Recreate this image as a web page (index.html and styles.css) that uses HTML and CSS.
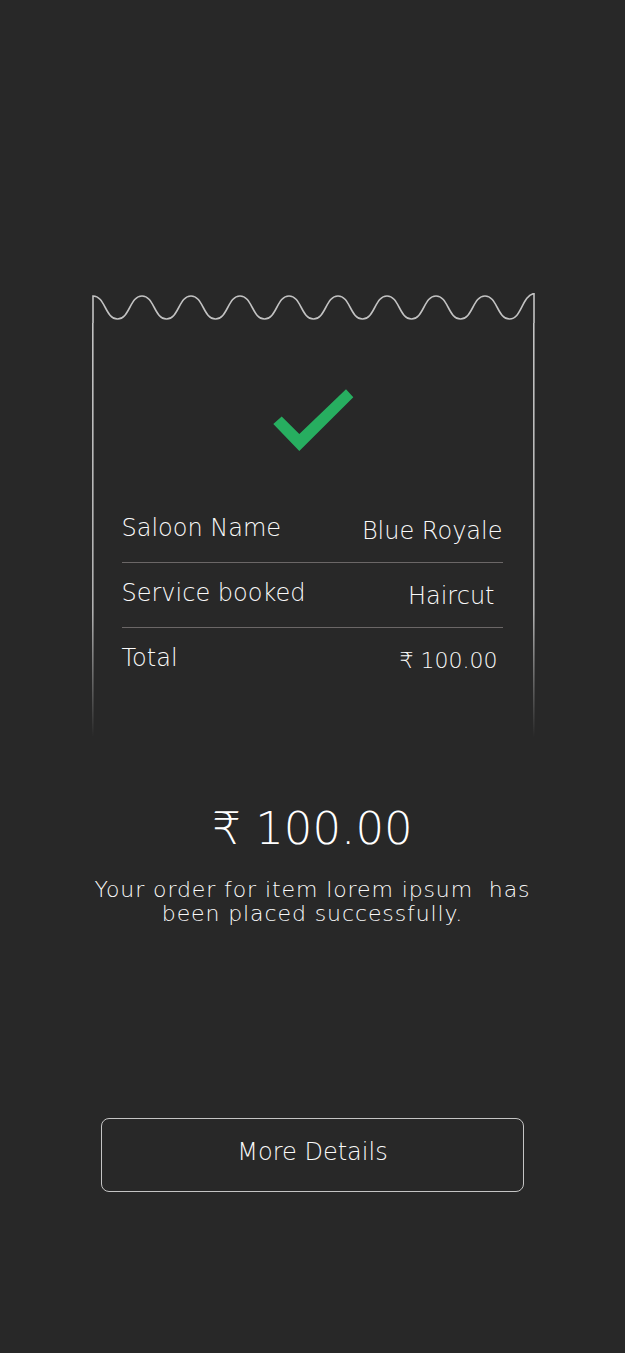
FILE: index.html
```html
<!DOCTYPE html>
<html lang="en">
<head>
<meta charset="utf-8">
<title>Order placed</title>
<link rel="stylesheet" href="styles.css">
</head>
<body>
<main class="page">
  <section class="receipt">
    <svg class="wave" width="443" height="30" viewBox="0 0 443 30">
      <path d="M1 30 L1 3 C13.25 3 13.25 26 25.5 26 S37.75 3 50 3 S62.25 26 74.5 26 S86.75 3 99 3 S111.25 26 123.5 26 S135.75 3 148 3 S160.25 26 172.5 26 S184.75 3 197 3 S209.25 26 221.5 26 S233.75 3 246 3 S258.25 26 270.5 26 S282.75 3 295 3 S307.25 26 319.5 26 S331.75 3 344 3 S356.25 26 368.5 26 S380.75 3 393 3 S405.25 26 417.5 26 S429.75 3 442 0.5 L442 30" fill="none" stroke="#c2c2c2" stroke-width="1.6"/>
    </svg>
    <div class="receipt-body">
      <svg class="check" width="81" height="63" viewBox="0 0 81 63">
        <polygon points="0.3,35 8.7,27.5 26.3,45 73,0.3 80.3,8.3 26.3,62" fill="#27ae60"/>
      </svg>
      <div class="rows">
        <div class="row row-first">
          <span class="label">Saloon Name</span>
          <span class="value">Blue Royale</span>
        </div>
        <div class="row">
          <span class="label">Service booked</span>
          <span class="value value-haircut">Haircut</span>
        </div>
        <div class="row row-last">
          <span class="label">Total</span>
          <span class="value value-amount">₹ 100.00</span>
        </div>
      </div>
    </div>
  </section>

  <h1 class="amount">₹ 100.00</h1>
  <p class="message">Your order for item lorem ipsum&nbsp; has<br>been placed successfully.</p>

  <button class="details-btn" type="button">More Details</button>
</main>
</body>
</html>
```

FILE: styles.css
```css
html, body {
  margin: 0;
  padding: 0;
}

body {
  background: #282828;
  color: #fafafa;
  font-family: "DejaVu Sans", "Open Sans", sans-serif;
  font-weight: 200;
}

.page {
  display: flex;
  flex-direction: column;
  align-items: center;
  min-height: 1353px;
}

.receipt {
  width: 443px;
  margin-top: 293px;
  margin-left: 1px;
}

.wave {
  display: block;
}

.receipt-body {
  box-sizing: border-box;
  height: 414px;
  padding: 0 32px 0 30px;
  display: flex;
  flex-direction: column;
  background:
    linear-gradient(to bottom, #c2c2c2 0%, #b0b0b0 70%, rgba(60,60,60,0) 100%) 0.4px 0 / 1.6px 100% no-repeat,
    linear-gradient(to bottom, #c2c2c2 0%, #b0b0b0 70%, rgba(60,60,60,0) 100%) 441.2px 0 / 1.6px 100% no-repeat;
}

.check {
  display: block;
  margin: 66px auto 0;
  position: relative;
  left: 1px;
}

.rows {
  margin-top: 60px;
  display: flex;
  flex-direction: column;
}

.row {
  display: flex;
  justify-content: space-between;
  align-items: flex-start;
  font-size: 24px;
  line-height: 32px;
  padding: 14px 0 15px;
  border-bottom: 1px solid #6b6767;
}

.row-first {
  padding-top: 0;
}

.row-last {
  border-bottom: none;
}

.value {
  padding-top: 3px;
}

.value-haircut {
  margin-right: 8px;
}

.value-amount {
  font-size: 22px;
  margin-right: 5px;
}

.amount {
  margin: 64px 0 0;
  font-size: 45px;
  font-weight: 200;
  line-height: 56px;
  color: #ffffff;
}

.message {
  margin: 21px 0 0;
  font-size: 22px;
  line-height: 24px;
  letter-spacing: 0.9px;
  text-align: center;
}

.details-btn {
  box-sizing: border-box;
  width: 423px;
  height: 74px;
  margin-top: 192px;
  padding: 0 0 6px;
  background: transparent;
  border: 1px solid #c4c4c4;
  border-radius: 8px;
  color: #fafafa;
  font-family: inherit;
  font-weight: 200;
  font-size: 24px;
  cursor: pointer;
}
```
